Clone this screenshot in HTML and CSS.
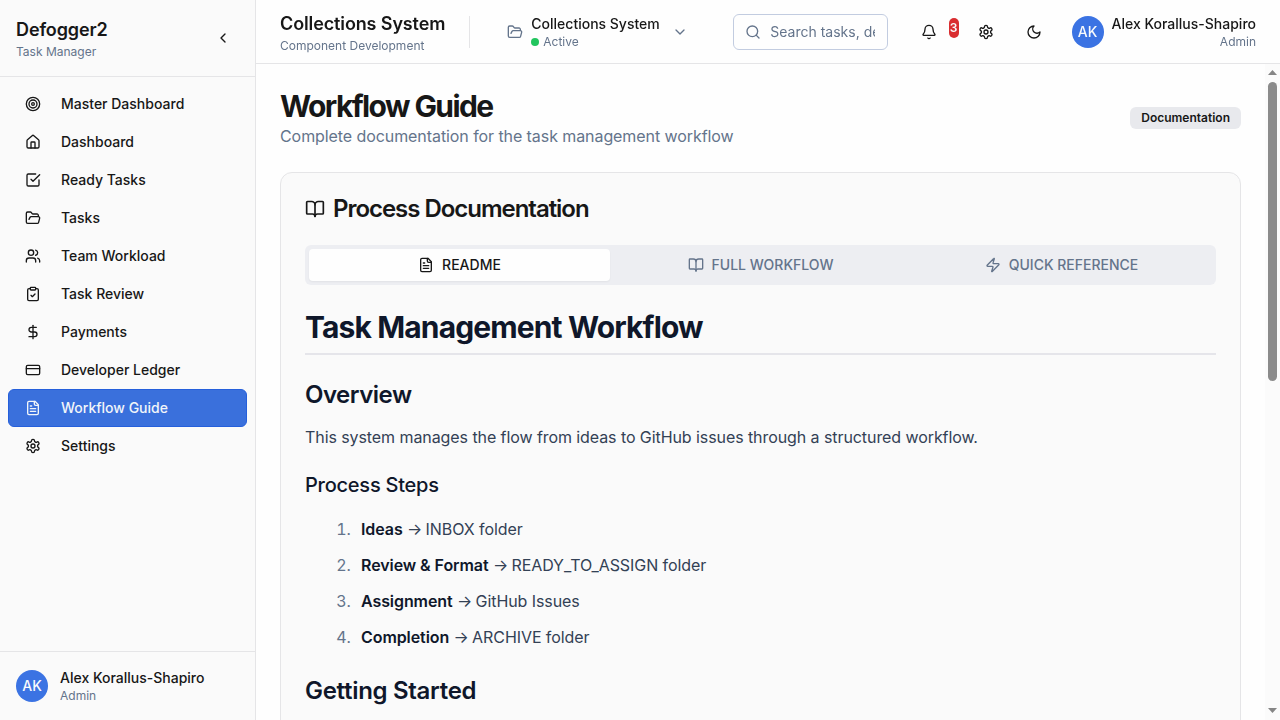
FILE: index.html
```html
<!DOCTYPE html>
<html lang="en">
<head>
<meta charset="utf-8">
<title>Workflow Guide</title>
<link rel="stylesheet" href="styles.css">
</head>
<body>
<svg class="sprite" aria-hidden="true">
  <symbol id="target" viewBox="0 0 24 24"><circle cx="12" cy="12" r="10"/><circle cx="12" cy="12" r="6"/><circle cx="12" cy="12" r="2"/></symbol>
  <symbol id="house" viewBox="0 0 24 24"><path d="M15 21v-8a1 1 0 0 0-1-1h-4a1 1 0 0 0-1 1v8"/><path d="M3 10a2 2 0 0 1 .709-1.528l7-5.999a2 2 0 0 1 2.582 0l7 5.999A2 2 0 0 1 21 10v9a2 2 0 0 1-2 2H5a2 2 0 0 1-2-2z"/></symbol>
  <symbol id="check" viewBox="0 0 24 24"><path d="m9 11 3 3L22 4"/><path d="M21 12v7a2 2 0 0 1-2 2H5a2 2 0 0 1-2-2V5a2 2 0 0 1 2-2h11"/></symbol>
  <symbol id="folder" viewBox="0 0 24 24"><path d="m6 14 1.5-2.9A2 2 0 0 1 9.24 10H20a2 2 0 0 1 1.94 2.5l-1.54 6a2 2 0 0 1-1.95 1.5H4a2 2 0 0 1-2-2V5a2 2 0 0 1 2-2h3.9a2 2 0 0 1 1.69.9l.81 1.2a2 2 0 0 0 1.67.9H18a2 2 0 0 1 2 2v2"/></symbol>
  <symbol id="users" viewBox="0 0 24 24"><path d="M16 21v-2a4 4 0 0 0-4-4H6a4 4 0 0 0-4 4v2"/><circle cx="9" cy="7" r="4"/><path d="M22 21v-2a4 4 0 0 0-3-3.87"/><path d="M16 3.13a4 4 0 0 1 0 7.75"/></symbol>
  <symbol id="clipboard" viewBox="0 0 24 24"><rect width="8" height="4" x="8" y="2" rx="1"/><path d="M16 4h2a2 2 0 0 1 2 2v14a2 2 0 0 1-2 2H6a2 2 0 0 1-2-2V6a2 2 0 0 1 2-2h2"/><path d="m9 14 2 2 4-4"/></symbol>
  <symbol id="dollar" viewBox="0 0 24 24"><path d="M12 2v20"/><path d="M17 5H9.5a3.5 3.5 0 0 0 0 7h5a3.5 3.5 0 0 1 0 7H6"/></symbol>
  <symbol id="card" viewBox="0 0 24 24"><rect width="20" height="14" x="2" y="5" rx="2"/><path d="M2 10h20"/></symbol>
  <symbol id="file" viewBox="0 0 24 24"><path d="M15 2H6a2 2 0 0 0-2 2v16a2 2 0 0 0 2 2h12a2 2 0 0 0 2-2V7Z"/><path d="M14 2v4a2 2 0 0 0 2 2h4"/><path d="M10 9H8"/><path d="M16 13H8"/><path d="M16 17H8"/></symbol>
  <symbol id="gear" viewBox="0 0 24 24"><path d="M12.22 2h-.44a2 2 0 0 0-2 2v.18a2 2 0 0 1-1 1.73l-.43.25a2 2 0 0 1-2 0l-.15-.08a2 2 0 0 0-2.73.73l-.22.38a2 2 0 0 0 .73 2.73l.15.1a2 2 0 0 1 1 1.72v.51a2 2 0 0 1-1 1.74l-.15.09a2 2 0 0 0-.73 2.73l.22.38a2 2 0 0 0 2.73.73l.15-.08a2 2 0 0 1 2 0l.43.25a2 2 0 0 1 1 1.73V20a2 2 0 0 0 2 2h.44a2 2 0 0 0 2-2v-.18a2 2 0 0 1 1-1.73l.43-.25a2 2 0 0 1 2 0l.15.08a2 2 0 0 0 2.73-.73l.22-.39a2 2 0 0 0-.73-2.73l-.15-.08a2 2 0 0 1-1-1.74v-.5a2 2 0 0 1 1-1.74l.15-.09a2 2 0 0 0 .73-2.73l-.22-.38a2 2 0 0 0-2.73-.73l-.15.08a2 2 0 0 1-2 0l-.43-.25a2 2 0 0 1-1-1.73V4a2 2 0 0 0-2-2z"/><circle cx="12" cy="12" r="3"/></symbol>
  <symbol id="left" viewBox="0 0 24 24"><path d="m15 18-6-6 6-6"/></symbol>
  <symbol id="down" viewBox="0 0 24 24"><path d="m6 9 6 6 6-6"/></symbol>
  <symbol id="search" viewBox="0 0 24 24"><circle cx="11" cy="11" r="8"/><path d="m21 21-4.3-4.3"/></symbol>
  <symbol id="bell" viewBox="0 0 24 24"><path d="M10.268 21a2 2 0 0 0 3.464 0"/><path d="M3.262 15.326A1 1 0 0 0 4 17h16a1 1 0 0 0 .74-1.673C19.41 13.956 18 12.499 18 8A6 6 0 0 0 6 8c0 4.499-1.411 5.956-2.738 7.326"/></symbol>
  <symbol id="moon" viewBox="0 0 24 24"><path d="M12 3a6 6 0 0 0 9 9 9 9 0 1 1-9-9Z"/></symbol>
  <symbol id="book" viewBox="0 0 24 24"><path d="M12 7v14"/><path d="M3 18a1 1 0 0 1-1-1V4a1 1 0 0 1 1-1h5a4 4 0 0 1 4 4 4 4 0 0 1 4-4h5a1 1 0 0 1 1 1v13a1 1 0 0 1-1 1h-6a3 3 0 0 0-3 3 3 3 0 0 0-3-3z"/></symbol>
  <symbol id="zap" viewBox="0 0 24 24"><path d="M4 14a1 1 0 0 1-.78-1.63l9.9-10.2a.5.5 0 0 1 .86.46l-1.92 6.02A1 1 0 0 0 13 10h7a1 1 0 0 1 .78 1.63l-9.9 10.2a.5.5 0 0 1-.86-.46l1.92-6.02A1 1 0 0 0 11 14z"/></symbol>
</svg>
<div class="app">
  <aside class="sidebar">
    <div class="brand">
      <div>
        <div class="brand-name">Defogger2</div>
        <div class="small">Task Manager</div>
      </div>
      <button class="icon-btn" aria-label="Collapse"><svg class="icon"><use href="#left"/></svg></button>
    </div>
    <nav class="nav">
      <a class="nav-item"><svg class="icon"><use href="#target"/></svg>Master Dashboard</a>
      <a class="nav-item"><svg class="icon"><use href="#house"/></svg>Dashboard</a>
      <a class="nav-item"><svg class="icon"><use href="#check"/></svg>Ready Tasks</a>
      <a class="nav-item"><svg class="icon"><use href="#folder"/></svg>Tasks</a>
      <a class="nav-item"><svg class="icon"><use href="#users"/></svg>Team Workload</a>
      <a class="nav-item"><svg class="icon"><use href="#clipboard"/></svg>Task Review</a>
      <a class="nav-item"><svg class="icon"><use href="#dollar"/></svg>Payments</a>
      <a class="nav-item"><svg class="icon"><use href="#card"/></svg>Developer Ledger</a>
      <a class="nav-item active"><svg class="icon"><use href="#file"/></svg>Workflow Guide</a>
      <a class="nav-item"><svg class="icon"><use href="#gear"/></svg>Settings</a>
    </nav>
    <div class="account">
      <div class="avatar">AK</div>
      <div>
        <div class="name">Alex Korallus-Shapiro</div>
        <div class="small">Admin</div>
      </div>
    </div>
  </aside>
  <div class="content">
    <header class="topbar">
      <div>
        <div class="project">Collections System</div>
        <div class="small">Component Development</div>
      </div>
      <div class="divider"></div>
      <button class="switcher">
        <svg class="icon"><use href="#folder"/></svg>
        <span class="switcher-text">
          <span class="name">Collections System</span>
          <span class="small status"><span class="dot"></span>Active</span>
        </span>
        <svg class="icon"><use href="#down"/></svg>
      </button>
      <div class="search">
        <svg class="icon"><use href="#search"/></svg>
        <input class="search-input" type="text" placeholder="Search tasks, developers...">
      </div>
      <div class="actions">
        <button class="icon-btn bell" aria-label="Notifications"><svg class="icon"><use href="#bell"/></svg><span class="count">3</span></button>
        <button class="icon-btn" aria-label="Settings"><svg class="icon"><use href="#gear"/></svg></button>
        <button class="icon-btn" aria-label="Theme"><svg class="icon"><use href="#moon"/></svg></button>
      </div>
      <div class="user">
        <div class="avatar">AK</div>
        <div class="user-text">
          <div class="name">Alex Korallus-Shapiro</div>
          <div class="small">Admin</div>
        </div>
      </div>
    </header>
    <div class="viewport">
      <main class="main">
        <div class="page-head">
          <div>
            <h1 class="page-title">Workflow Guide</h1>
            <p class="page-sub">Complete documentation for the task management workflow</p>
          </div>
          <span class="badge">Documentation</span>
        </div>
        <section class="panel">
          <h2 class="panel-title"><svg class="icon icon-lg"><use href="#book"/></svg>Process Documentation</h2>
          <div class="tabs">
            <button class="tab selected"><svg class="icon"><use href="#file"/></svg>README</button>
            <button class="tab"><svg class="icon"><use href="#book"/></svg>FULL WORKFLOW</button>
            <button class="tab"><svg class="icon"><use href="#zap"/></svg>QUICK REFERENCE</button>
          </div>
          <article class="doc">
            <h1>Task Management Workflow</h1>
            <h2 class="tight">Overview</h2>
            <p>This system manages the flow from ideas to GitHub issues through a structured workflow.</p>
            <h3>Process Steps</h3>
            <ol>
              <li><strong>Ideas</strong> <span class="to">→</span> INBOX folder</li>
              <li><strong>Review &amp; Format</strong> <span class="to">→</span> READY_TO_ASSIGN folder</li>
              <li><strong>Assignment</strong> <span class="to">→</span> GitHub Issues</li>
              <li><strong>Completion</strong> <span class="to">→</span> ARCHIVE folder</li>
            </ol>
            <h2>Getting Started</h2>
          </article>
        </section>
      </main>
      <div class="scrollbar">
        <svg class="arrow" viewBox="0 0 9 5"><path d="M4.5 0 9 5H0z"/></svg>
        <div class="thumb"></div>
        <svg class="arrow arrow-down" viewBox="0 0 9 5"><path d="M0 0h9L4.5 5z"/></svg>
      </div>
    </div>
  </div>
</div>
</body>
</html>
```
FILE: styles.css
```css
* { box-sizing: border-box; margin: 0; padding: 0; }
body {
  font-family: Inter, "Liberation Sans", sans-serif;
  font-size: 16px;
  line-height: 24px;
  color: #171717;
  background: #fefefe;
}
button, input { font: inherit; color: inherit; background: none; border: 0; }
.sprite { display: none; }
.icon {
  width: 16px; height: 16px; flex: none;
  fill: none; stroke: currentColor; stroke-width: 2;
  stroke-linecap: round; stroke-linejoin: round;
}
.icon-lg { width: 20px; height: 20px; }
.small { font-size: 12px; line-height: 16px; color: #64748b; }
.name { font-size: 14px; line-height: 20px; font-weight: 500; white-space: nowrap; }

.app { display: flex; height: 720px; overflow: hidden; }
.sidebar {
  width: 256px; flex: none;
  display: flex; flex-direction: column;
  background: #fafafa; border-right: 1px solid #e5e5e7;
}
.brand {
  display: flex; align-items: center; justify-content: space-between;
  padding: 16px; border-bottom: 1px solid #e5e5e7;
}
.brand-name, .project {
  font-size: 18px; line-height: 28px; font-weight: 600; white-space: nowrap;
  letter-spacing: -.12px;
}
.icon-btn { width: 32px; height: 32px; display: flex; align-items: center; justify-content: center; }
.nav { flex: 1; padding: 8px; }
.nav-item {
  display: flex; align-items: center; gap: 20px;
  height: 38px; padding: 0 16px;
  border: 1px solid transparent; border-radius: 6px;
  font-size: 14px; line-height: 20px; font-weight: 500;
}
.active { background: #3a70dc; border-color: #255fdb; color: #f1f5f9; }
.account { display: flex; align-items: center; gap: 12px; padding: 16px; border-top: 1px solid #e5e5e7; }
.avatar {
  width: 32px; height: 32px; flex: none; border-radius: 50%;
  display: flex; align-items: center; justify-content: center;
  background: #3b73e3; color: #f8fafc;
  font-size: 14px; font-weight: 500;
}

.content { flex: 1; min-width: 0; display: flex; flex-direction: column; }
.topbar {
  height: 64px; flex: none;
  display: flex; align-items: center;
  padding: 0 24px; border-bottom: 1px solid #e5e5e7;
  background: rgba(254, 254, 254, .95);
  backdrop-filter: blur(8px);
}
.divider { width: 1px; height: 32px; margin: 0 24px; background: #e5e5e7; }
.switcher { display: flex; align-items: center; gap: 8px; width: 181px; margin-left: 13px; text-align: left; color: #64748b; }
.switcher-text { flex: 1; display: flex; flex-direction: column; }
.switcher-text .name { color: #171717; }
.status { display: flex; align-items: center; gap: 4px; }
.dot { width: 8px; height: 8px; border-radius: 50%; background: #22c55e; }
.search {
  display: flex; align-items: center; gap: 9px;
  width: 155px; height: 36px; margin-left: 45px; padding: 0 12px 0 11px;
  border: 1px solid #c2cce0; border-radius: 6px; color: #64748b;
}
.search-input { flex: 1; min-width: 0; font-size: 14px; line-height: 20px; outline: none; }
.search-input::placeholder { color: #64748b; opacity: 1; }
.actions { display: flex; align-items: center; margin-left: auto; gap: 16px; }
.bell { position: relative; margin-right: 9px; }
.count {
  position: absolute; left: 36px; top: 2px;
  width: 10px; height: 20px; border-radius: 5px;
  background: #d92d30; color: #f8fafc;
  font-size: 12px; line-height: 19px; font-weight: 600; text-align: center;
}
.user { display: flex; align-items: center; gap: 8px; margin-left: 22px; }
.user-text { text-align: right; }

.viewport { flex: 1; min-height: 0; display: flex; }
.main { flex: 1; min-width: 0; overflow: hidden; padding: 24px; }
.scrollbar {
  width: 15px; flex: none;
  display: flex; flex-direction: column; align-items: center;
  padding: 6px 0 7px; background: #fbfbfb;
}
.arrow { width: 9px; height: 5px; flex: none; fill: #858585; }
.arrow-down { margin-top: auto; }
.thumb { width: 9px; height: 299px; margin-top: 7px; border-radius: 5px; background: #8b8b8b; }

.page-head { display: flex; align-items: center; justify-content: space-between; margin-bottom: 24px; }
.page-title { font-size: 30px; line-height: 36px; font-weight: 700; letter-spacing: -1.6px; }
.page-sub { color: #64748b; letter-spacing: -.078px; }
.badge {
  height: 22px; padding: 0 11px; border-radius: 6px;
  background: #e8e9ed; font-size: 12px; line-height: 22px; font-weight: 600;
}
.panel {
  min-height: 1177px; padding: 24px;
  background: #fafafa; border: 1px solid #e5e5e7; border-radius: 12px;
}
.panel-title {
  display: flex; align-items: center; gap: 8px;
  font-size: 24px; line-height: 24px; font-weight: 600; letter-spacing: -1.03px;
}
.tabs {
  display: grid; grid-template-columns: repeat(3, 1fr);
  height: 40px; margin: 24px 0; padding: 4px;
  background: #edeef2; border-radius: 6px;
}
.tab {
  display: flex; align-items: center; justify-content: center; gap: 8px;
  border-radius: 4px; color: #64748b;
  font-size: 14px; line-height: 20px; font-weight: 500;
}
.selected { background: #fefefe; color: #171717; box-shadow: 0 1px 2px rgba(0, 0, 0, .05); }
.doc { color: #334155; letter-spacing: -.078px; }
.doc h1, .doc h2, .doc h3, .doc strong { color: #0f172a; }
.doc h1 {
  font-size: 30px; line-height: 36px; font-weight: 700; letter-spacing: -.87px;
  padding-bottom: 8px; border-bottom: 2px solid #e5e5ea;
}
.doc h2 { font-size: 24px; line-height: 32px; font-weight: 600; letter-spacing: -.3px; margin-top: 24px; }
.doc .tight { letter-spacing: -.5px; }
.doc p { line-height: 28px; margin-top: 12px; }
.doc h3 { font-size: 20px; line-height: 28px; font-weight: 500; letter-spacing: -.24px; margin-top: 20px; }
.doc ol { margin: 16px 0 0 24px; padding-left: 26px; }
.doc li { line-height: 28px; padding-left: 6px; }
.doc li + li { margin-top: 8px; }
.doc li::marker { color: #64748b; }
.doc strong { font-weight: 600; }
.to { letter-spacing: -1.2px; }
```
